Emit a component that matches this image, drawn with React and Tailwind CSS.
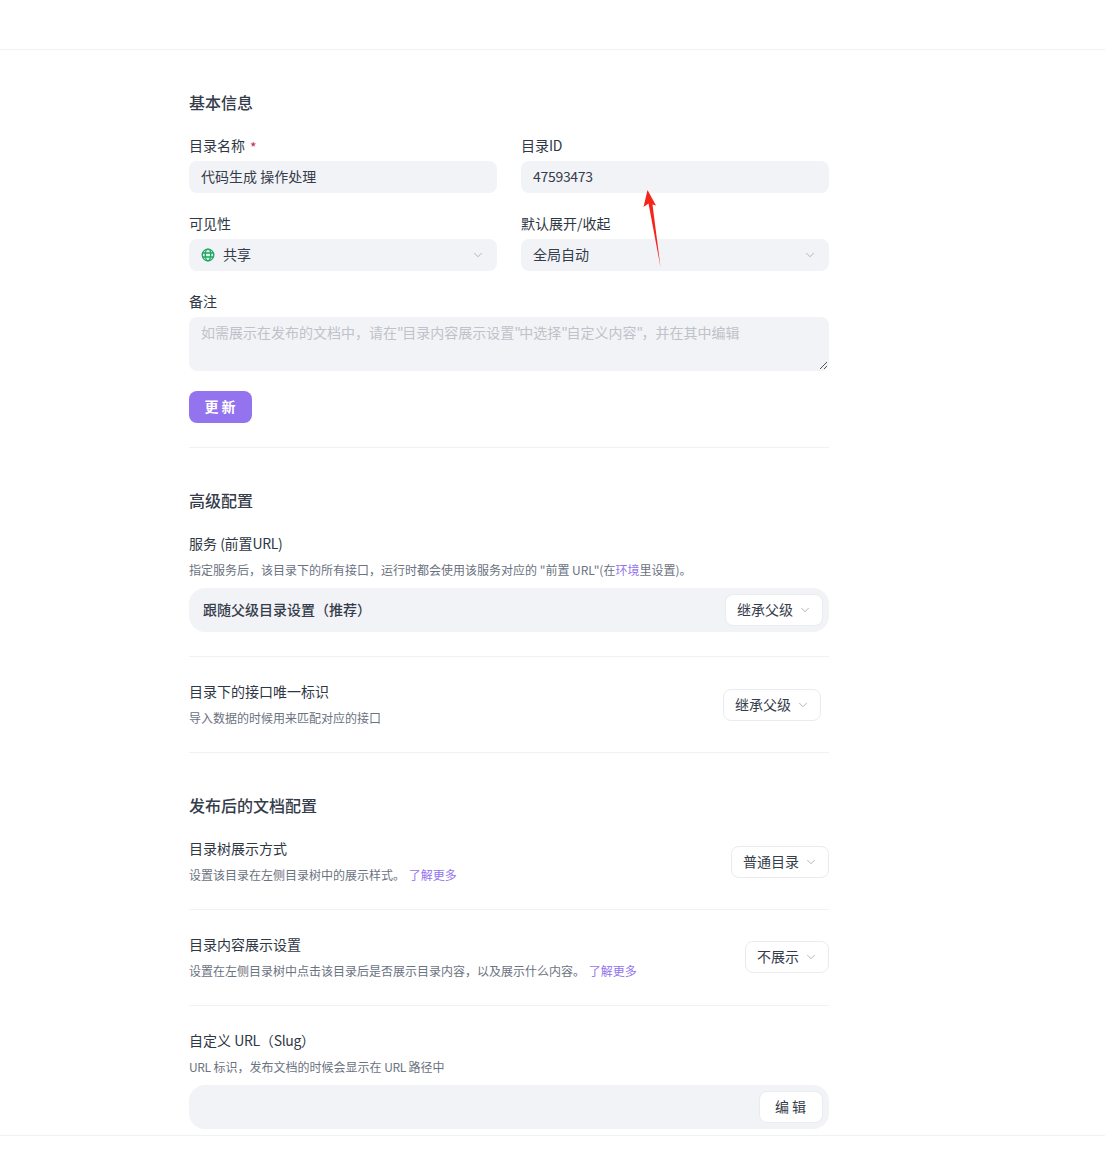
import React from 'react';
import { ChevronDown } from 'lucide-react';

const fontStack = "font-['Noto_Sans_CJK_SC','Noto_Sans',sans-serif]";

const Label = ({ children, required }) => (
  <div className="h-[22px] text-sm leading-[20px] text-[#2f3745]">
    {children}
    {required && <span className="ml-[5px] inline-block translate-y-[2px] text-sm text-[#c22b4f]">*</span>}
  </div>
);

const Title = ({ children }) => (
  <h2 className="h-6 text-base leading-[22px] font-medium text-[#353c4a]">{children}</h2>
);

const Desc = ({ children }) => (
  <p className="h-5 text-xs leading-[18px] text-[#6b7280]">{children}</p>
);

const Divider = () => <div className="h-px bg-[#f0f1f3]" />;

const Field = ({ label, required, children }) => (
  <div className="flex flex-col gap-1">
    <Label required={required}>{label}</Label>
    {children}
  </div>
);

const FilledBox = ({ children, className = '' }) => (
  <div className={`flex h-8 items-center rounded-lg bg-[#f2f3f7] px-3 text-sm text-[#353c4a] ${className}`}>
    {children}
  </div>
);

const FilledSelect = ({ children }) => (
  <FilledBox className="justify-between">
    <div className="flex items-center gap-2">{children}</div>
    <ChevronDown size={14} strokeWidth={1.5} className="text-[#a9adb6]" />
  </FilledBox>
);

const OutlineSelect = ({ children, className = '' }) => (
  <div className={`flex h-8 items-center gap-[5px] rounded-lg border border-[#e9ebef] bg-white pr-[10px] pl-[11px] text-sm text-[#353c4a] ${className}`}>
    <span className="pb-[2px]">{children}</span>
    <ChevronDown size={14} strokeWidth={1.5} className="text-[#a9adb6]" />
  </div>
);

const GlobeIcon = () => (
  <svg width="14" height="14" viewBox="0 0 14 14" fill="none" stroke="#22a565" strokeWidth="1.3">
    <circle cx="7" cy="7" r="5.8" fill="#dcf3e6" />
    <ellipse cx="7" cy="7" rx="2.7" ry="5.8" />
    <path d="M1.4 5h11.2M1.4 9h11.2" />
  </svg>
);

// the narrow straight quote of the reference
const Q = () => <span className="tracking-[-1.5px]">"</span>;

// latin runs are a bit narrower than in Noto Sans CJK
const Latin = ({ children }) => <span className="tracking-[-0.35px]">{children}</span>;

const Link = ({ children }) => <span className="ml-px text-[#9373ee]">{children}</span>;

const SettingRow = ({ label, desc, children, className }) => (
  <div className={`flex items-start justify-between ${className}`}>
    <div className="flex flex-col gap-[6px] pt-px">
      <Label>{label}</Label>
      <Desc>{desc}</Desc>
    </div>
    <div className="mt-2">{children}</div>
  </div>
);

export default function App() {
  return (
    <div className={`relative flex h-[1163px] flex-col overflow-hidden bg-white ${fontStack}`}>
      <header className="h-[50px] shrink-0 border-b border-[#f0f1f3]" />

      <main className="min-h-0 flex-1 pl-[189px]">
        <div className="w-[640px]">
          {/* Basic info */}
          <div className="pt-[41px]">
            <Title>基本信息</Title>
          </div>
          <div className="mt-5 grid grid-cols-2 gap-x-6 gap-y-5">
            <Field label="目录名称" required>
              <FilledBox><span className="pb-[2px]">代码生成 操作处理</span></FilledBox>
            </Field>
            <Field label={<>目录<Latin>ID</Latin></>}>
              <FilledBox><span className="pb-[2px] tracking-[-0.3px]">47593473</span></FilledBox>
            </Field>
            <Field label="可见性">
              <FilledSelect>
                <GlobeIcon />
                <span className="pb-[2px]">共享</span>
              </FilledSelect>
            </Field>
            <Field label="默认展开/收起">
              <FilledSelect><span className="pb-[2px]">全局自动</span></FilledSelect>
            </Field>
          </div>
          <div className="mt-5">
            <Field label="备注">
              <div className="relative h-[54px] rounded-lg bg-[#f2f3f7] px-3 py-[4px] text-sm leading-[22px] text-[#bfc2c9]">
                如需展示在发布的文档中，请在<Q />目录内容展示设置<Q />中选择<Q />自定义内容<Q />，并在其中编辑
                <svg className="absolute right-[1px] bottom-[1px]" width="9" height="9" viewBox="0 0 9 9" stroke="#555" strokeWidth="1">
                  <path d="M1 8L8 1M5 8L8 5" />
                </svg>
              </div>
            </Field>
          </div>
          <button className="mt-5 flex h-8 w-[63px] items-center justify-center rounded-lg bg-[#9373ee] pb-[2px] pl-[2px] text-sm font-semibold tracking-[3px] text-white">
            更新
          </button>
          <div className="mt-6">
            <Divider />
          </div>

          {/* Advanced */}
          <div className="mt-[41px]">
            <Title>高级配置</Title>
          </div>
          <div className="mt-5 flex flex-col gap-[6px]">
            <Label>服务 <Latin>(</Latin>前置<Latin>URL)</Latin></Label>
            <Desc>
              指定服务后，该目录下的所有接口，运行时都会使用该服务对应的 "前置 URL"(在<span className="text-[#9373ee]">环境</span>里设置)。
            </Desc>
          </div>
          <div className="mt-[7px] flex h-11 items-center justify-between rounded-2xl bg-[#f2f3f7] pr-[6px] pl-[14px]">
            <span className="pb-[2px] text-sm font-medium text-[#353c4a]">跟随父级目录设置（推荐）</span>
            <OutlineSelect>继承父级</OutlineSelect>
          </div>
          <div className="mt-6">
            <Divider />
          </div>
          <SettingRow className="h-[95px] pt-[23px] pr-2" label="目录下的接口唯一标识" desc="导入数据的时候用来匹配对应的接口">
            <OutlineSelect className="mt-px">继承父级</OutlineSelect>
          </SettingRow>
          <Divider />

          {/* Published docs */}
          <div className="mt-[41px]">
            <Title>发布后的文档配置</Title>
          </div>
          <SettingRow
            className="mt-[19px]"
            label="目录树展示方式"
            desc={<>设置该目录在左侧目录树中的展示样式。 <Link>了解更多</Link></>}
          >
            <OutlineSelect className="mt-px">普通目录</OutlineSelect>
          </SettingRow>
          <div className="mt-[23px]">
            <Divider />
          </div>
          <SettingRow
            className="mt-[23px]"
            label="目录内容展示设置"
            desc={<>设置在左侧目录树中点击该目录后是否展示目录内容，以及展示什么内容。 <Link>了解更多</Link></>}
          >
            <OutlineSelect>不展示</OutlineSelect>
          </SettingRow>
          <div className="mt-[23px]">
            <Divider />
          </div>
          <div className="mt-6 flex flex-col gap-[6px]">
            <Label>自定义 <Latin>URL</Latin>（<Latin>Slug</Latin>）</Label>
            <Desc><Latin>URL</Latin> 标识，发布文档的时候会显示在 <Latin>URL</Latin> 路径中</Desc>
          </div>
          <div className="mt-[7px] flex h-11 items-center justify-end rounded-2xl bg-[#f2f3f7] pr-[6px]">
            <button className="h-8 w-16 rounded-lg border border-[#e9ebef] bg-white pb-[2px] pl-[2px] text-sm tracking-[3px] text-[#353c4a]">
              编辑
            </button>
          </div>
        </div>
      </main>

      <footer className="relative h-[28px] shrink-0 border-t border-[#f0f1f3] bg-white" />

      {/* red annotation arrow on top of the screenshot */}
      <svg className="absolute top-[188px] left-[640px]" width="26" height="82" viewBox="0 0 26 82">
        <path d="M7.5 2L16 17.5L12.5 16.5L20.5 79L8.5 15.5L3.5 19Z" fill="#f5251a" />
      </svg>
    </div>
  );
}
